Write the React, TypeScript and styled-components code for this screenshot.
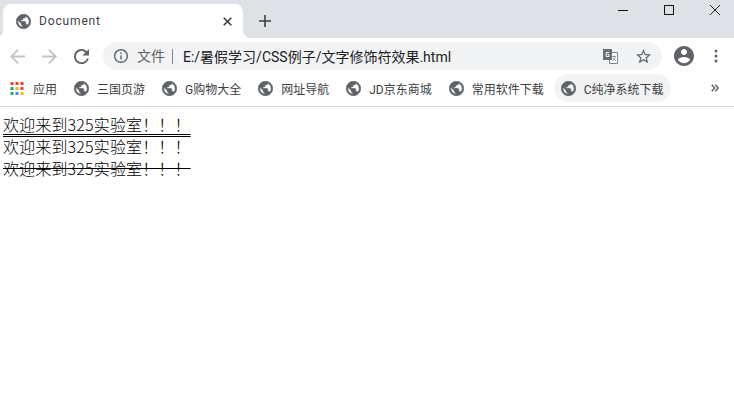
import React, { FC } from 'react';
import styled, { createGlobalStyle } from 'styled-components';

const UI_FONT = `'Noto Sans CJK SC', 'Noto Sans', sans-serif`;

const GlobalStyle = createGlobalStyle`
  html, body {
    margin: 0;
    padding: 0;
    background: #fff;
  }
`;

const Window = styled.div`
  width: 734px;
  height: 405px;
  overflow: hidden;
  background: #fff;
  font-family: 'Roboto', ${UI_FONT};
`;

const TabStrip = styled.div`
  position: relative;
  display: flex;
  align-items: flex-end;
  height: 38px;
  padding-left: 3px;
  background: #dee1e6;
`;

const Tab = styled.div`
  position: relative;
  display: flex;
  align-items: center;
  width: 240px;
  height: 34px;
  padding: 0 11px 0 13px;
  box-sizing: border-box;
  background: #fff;
  border-radius: 8px 8px 0 0;

  &::after {
    content: '';
    position: absolute;
    right: -8px;
    bottom: 0;
    width: 8px;
    height: 8px;
    background: radial-gradient(circle at 100% 0, transparent 8px, #fff 8.5px);
  }

  &::before {
    content: '';
    position: absolute;
    left: -8px;
    bottom: 0;
    width: 8px;
    height: 8px;
    background: radial-gradient(circle at 0 0, transparent 8px, #fff 8.5px);
  }
`;

const TabTitle = styled.span`
  flex: 1;
  margin-left: 8px;
  font-size: 12px;
  color: #3c4043;
  letter-spacing: 0.85px;
`;

const NewTabIcon = styled.svg`
  margin: 0 0 11px 16px;
`;

const WindowControls = styled.div`
  position: absolute;
  top: 0;
  right: 14px;
  display: flex;
  gap: 36px;
`;

const WindowButton = styled.div`
  display: flex;
  align-items: center;
  justify-content: center;
  width: 10px;
  height: 20px;
`;

const Toolbar = styled.div`
  display: flex;
  align-items: center;
  height: 36px;
  padding: 0 6px 0 9px;
  background: #fff;
`;

const NavButton = styled.div`
  display: flex;
  align-items: center;
  justify-content: center;
  width: 16px;
  height: 16px;
  margin-right: 16px;
`;

const Omnibox = styled.div`
  display: flex;
  align-items: center;
  width: 559px;
  height: 28px;
  margin-left: -2px;
  padding: 0 11px;
  box-sizing: border-box;
  background: #f1f3f4;
  border-radius: 14px;
`;

const SecurityLabel = styled.span`
  margin-left: 9px;
  padding-right: 7px;
  border-right: 1px solid #80868b;
  font-size: 14px;
  line-height: 15px;
  color: #5f6368;
`;

const UrlText = styled.span`
  flex: 1;
  margin-left: 10px;
  font-size: 14px;
  color: #202124;
  white-space: nowrap;
`;

const OmniboxAction = styled.svg`
  margin-left: 18px;
`;

const ToolbarEnd = styled.div`
  display: flex;
  align-items: center;
  gap: 20px;
  margin-left: 12px;
`;

const BookmarkBar = styled.div`
  display: flex;
  align-items: flex-start;
  gap: 3px;
  height: 32px;
  padding-left: 3px;
  border-bottom: 1px solid #d9dbdf;
  background: #fff;
`;

const Bookmark = styled.div<{ $hover?: boolean }>`
  display: flex;
  align-items: center;
  gap: 8px;
  height: 28px;
  padding: 0 7px;
  border-radius: 14px;
  background: ${({ $hover }) => ($hover ? '#f1f3f4' : 'transparent')};
  font-size: 12px;
  color: #3c4043;
  white-space: nowrap;
`;

const OverflowIcon = styled.svg`
  margin: 10px 15px 0 auto;
`;

const Page = styled.main`
  padding: 6px 3px;
  font-family: 'Noto Sans CJK SC', 'Noto Sans', sans-serif;
  font-size: 16px;
  font-weight: 300;
  line-height: 22px;
  letter-spacing: 0.15px;
  color: #000;
`;

const Line = styled.div<{ $decoration?: string }>`
  width: fit-content;
  text-decoration: ${({ $decoration }) => $decoration || 'none'};
  text-decoration-thickness: 1px;
  text-underline-offset: 3px;
`;

const GLOBE =
  'M12 2C6.48 2 2 6.48 2 12s4.48 10 10 10 10-4.48 10-10S17.52 2 12 2zm-1 17.93c-3.95-.49-7-3.85-7-7.93 0-.62.08-1.21.21-1.79L9 15v1c0 1.1.9 2 2 2v1.93zm6.9-2.54c-.26-.81-1-1.39-1.9-1.39h-1v-3c0-.55-.45-1-1-1H8v-2h2c.55 0 1-.45 1-1V7h2c1.1 0 2-.9 2-2v-.41c2.93 1.19 5 4.06 5 7.41 0 2.08-.8 3.97-2.1 5.39z';

const Globe: FC = () => (
  <svg width='15' height='15' viewBox='1.5 1.5 21 21'>
    <path fill='#5f6368' stroke='#5f6368' strokeWidth='1' d={GLOBE} />
  </svg>
);

const AppsIcon: FC = () => {
  const colors = ['#ea4335', '#ea4335', '#ea4335', '#34a853', '#fbbc04', '#ea4335', '#34a853', '#4285f4', '#fbbc04'];
  return (
    <svg width='15' height='15' viewBox='0 0 15 15'>
      {colors.map((c, i) => (
        <rect key={i} x={0.5 + (i % 3) * 5} y={1 + Math.floor(i / 3) * 5} width='3' height='3' fill={c} />
      ))}
    </svg>
  );
};

const BOOKMARKS = ['三国页游', 'G购物大全', '网址导航', 'JD京东商城', '常用软件下载'];

export default function App() {
  return (
    <Window>
      <GlobalStyle />
      <TabStrip>
        <Tab>
          <Globe />
          <TabTitle>Document</TabTitle>
          <svg width='9' height='9' viewBox='0 0 9 9'>
            <path d='M.7.7l7.6 7.6M8.3.7L.7 8.3' stroke='#3c4043' strokeWidth='1.6' />
          </svg>
        </Tab>
        <NewTabIcon width='12' height='12' viewBox='0 0 12 12'>
          <path d='M6 0v12M0 6h12' stroke='#3c4043' strokeWidth='1.6' />
        </NewTabIcon>
        <WindowControls>
          <WindowButton>
            <svg width='10' height='10' viewBox='0 0 10 10'>
              <path d='M0 5.5h10' stroke='#111' />
            </svg>
          </WindowButton>
          <WindowButton>
            <svg width='10' height='10' viewBox='0 0 10 10'>
              <rect x='.5' y='.5' width='9' height='9' fill='none' stroke='#111' />
            </svg>
          </WindowButton>
          <WindowButton>
            <svg width='10' height='10' viewBox='0 0 10 10'>
              <path d='M0 0l10 10M10 0L0 10' stroke='#111' strokeWidth='.9' />
            </svg>
          </WindowButton>
        </WindowControls>
      </TabStrip>
      <Toolbar>
        <NavButton>
          <svg width='15' height='15' viewBox='4 4 16 16'>
            <path fill='#c1c3c6' d='M20 11H7.83l5.59-5.59L12 4l-8 8 8 8 1.41-1.41L7.83 13H20v-2z' />
          </svg>
        </NavButton>
        <NavButton>
          <svg width='15' height='15' viewBox='4 4 16 16'>
            <path fill='#c1c3c6' d='M12 4l-1.41 1.41L16.17 11H4v2h12.17l-5.58 5.59L12 20l8-8z' />
          </svg>
        </NavButton>
        <NavButton>
          <svg width='15' height='15' viewBox='4 4 16 16'>
            <path
              fill='#5f6368'
              d='M17.65 6.35A7.958 7.958 0 0 0 12 4c-4.42 0-7.99 3.58-7.99 8s3.57 8 7.99 8c3.73 0 6.84-2.55 7.73-6h-2.08A5.99 5.99 0 0 1 12 18c-3.31 0-6-2.69-6-6s2.69-6 6-6c1.66 0 3.14.69 4.22 1.78L13 11h7V4l-2.35 2.35z'
            />
          </svg>
        </NavButton>
        <Omnibox>
          <svg width='14' height='14' viewBox='2 2 20 20'>
            <path
              fill='#5f6368'
              d='M11 7h2v2h-2zm0 4h2v6h-2zm1-9C6.48 2 2 6.48 2 12s4.48 10 10 10 10-4.48 10-10S17.52 2 12 2zm0 18c-4.41 0-8-3.59-8-8s3.59-8 8-8 8 3.59 8 8-3.59 8-8 8z'
            />
          </svg>
          <SecurityLabel>文件</SecurityLabel>
          <UrlText>E:/暑假学习/CSS例子/文字修饰符效果.html</UrlText>
          <svg width='15' height='15' viewBox='0 0 15 15'>
            <path fill='#fff' stroke='#80868b' d='M6.5 3.5h8v11h-8z' />
            <path fill='none' stroke='#80868b' d='M9 7.5h4M11 6.5v1M9.5 12l3-4M10 8.5l3 3.5' strokeWidth='.8' />
            <path fill='#6b6f74' d='M0 0h9v11H0z' />
            <path fill='none' stroke='#f1f3f4' d='M6 3.5H3.2v4H6V5.5H4.5' strokeWidth='1' />
          </svg>
          <OmniboxAction width='15' height='15' viewBox='2 2 20 20'>
            <path
              fill='#5f6368'
              d='M22 9.24l-7.19-.62L12 2 9.19 8.63 2 9.24l5.46 4.73L5.82 21 12 17.27 18.18 21l-1.63-7.03L22 9.24zM12 15.4l-3.76 2.27 1-4.28-3.32-2.88 4.38-.38L12 6.1l1.71 4.04 4.38.38-3.32 2.88 1 4.28L12 15.4z'
            />
          </OmniboxAction>
        </Omnibox>
        <ToolbarEnd>
          <svg width='20' height='20' viewBox='2 2 20 20'>
            <path
              fill='#5f6368'
              d='M12 2C6.48 2 2 6.48 2 12s4.48 10 10 10 10-4.48 10-10S17.52 2 12 2zm0 3c1.66 0 3 1.34 3 3s-1.34 3-3 3-3-1.34-3-3 1.34-3 3-3zm0 14.2c-2.5 0-4.71-1.28-6-3.22.03-1.99 4-3.08 6-3.08 1.99 0 5.97 1.09 6 3.08-1.29 1.94-3.5 3.22-6 3.22z'
            />
          </svg>
          <svg width='4' height='14' viewBox='0 0 4 14'>
            <circle cx='2' cy='2' r='1.5' fill='#5f6368' />
            <circle cx='2' cy='7' r='1.5' fill='#5f6368' />
            <circle cx='2' cy='12' r='1.5' fill='#5f6368' />
          </svg>
        </ToolbarEnd>
      </Toolbar>
      <BookmarkBar>
        <Bookmark>
          <AppsIcon />
          应用
        </Bookmark>
        {BOOKMARKS.map((name) => (
          <Bookmark key={name}>
            <Globe />
            {name}
          </Bookmark>
        ))}
        <Bookmark $hover>
          <Globe />
          C纯净系统下载
        </Bookmark>
        <OverflowIcon width='8' height='8' viewBox='0 0 8 8'>
          <path d='M.7.7L3.7 4 .7 7.3M4.3.7L7.3 4 4.3 7.3' fill='none' stroke='#5f6368' strokeWidth='1.5' />
        </OverflowIcon>
      </BookmarkBar>
      <Page>
        <Line $decoration='underline double'>欢迎来到325实验室！！！</Line>
        <Line>欢迎来到325实验室！！！</Line>
        <Line $decoration='line-through'>欢迎来到325实验室！！！</Line>
      </Page>
    </Window>
  );
}
